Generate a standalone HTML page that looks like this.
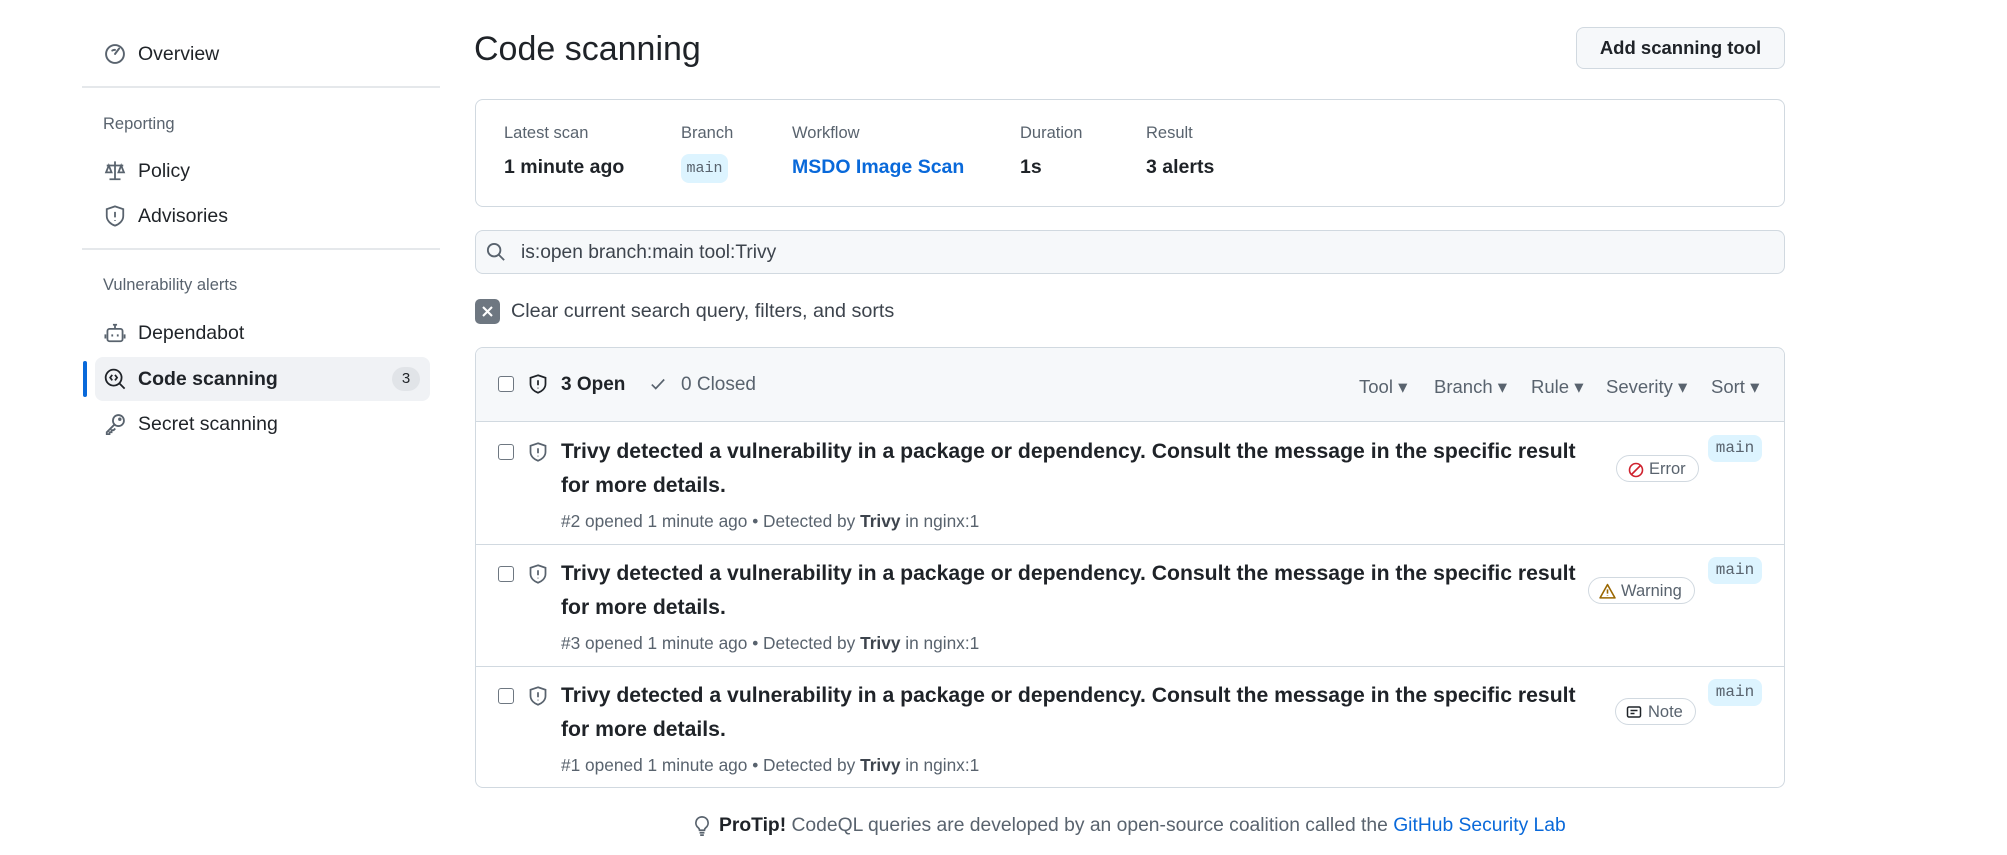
<!DOCTYPE html>
<html><head><meta charset="utf-8"><style>
*{box-sizing:border-box;margin:0;padding:0}
body{width:2007px;height:855px;background:#fff;font-family:"Liberation Sans",sans-serif;color:#1f2328;position:relative;overflow:hidden;font-size:18px}
.a{position:absolute;white-space:nowrap}
.ic{position:absolute}
.mut{color:#59636e}
.hr{position:absolute;height:2px;background:#e5e8eb}
.box{position:absolute;border:1.5px solid #d1d9e0;border-radius:8px}
.cb{position:absolute;width:16px;height:16px;border:1.5px solid #6e7781;border-radius:3px;background:#fff}
.tag{position:absolute;background:#ddf4ff;border-radius:8px;color:#59636e;font-family:"Liberation Mono",monospace;font-size:16px;line-height:26px;text-align:center}
.pill{position:absolute;border:1.5px solid #d1d9e0;border-radius:14px;height:27px;font-size:16.5px;color:#59636e;line-height:26px;padding:0 12px 0 32px}
.t{font-weight:bold;font-size:21.2px;line-height:34px}
.meta{font-size:17.3px}
</style></head><body>
<svg class="ic" style="left:104px;top:43px" width="22" height="22" viewBox="0 0 16 16" fill="none" stroke="#59636e" stroke-width="1.4"><circle cx="8" cy="8" r="6.5"/><path d="M8 8l3-4M6 5.5A3 3 0 0 1 8 5" stroke-linecap="round"/></svg>
<div class="a" style="left:138px;top:43px;font-size:19.5px">Overview</div>
<div class="hr" style="left:82px;top:86px;width:358px"></div>
<div class="a mut" style="left:103px;top:115px;font-size:16.5px">Reporting</div>
<svg class="ic" style="left:104px;top:160px" width="22" height="22" viewBox="0 0 16 16" fill="none" stroke="#59636e" stroke-width="1.3"><path d="M8 1v13M4 14h8M2 4h12M3.5 4l-2 5h4zM12.5 4l-2 5h4z"/></svg>
<div class="a" style="left:138px;top:160px;font-size:19.5px">Policy</div>
<svg class="ic" style="left:104px;top:205px" width="22" height="22" viewBox="0 0 16 16" fill="none" stroke="#59636e" stroke-width="1.3"><path d="M8 1l6 2v5c0 3.5-3 6-6 7-3-1-6-3.5-6-7V3z"/><path d="M8 5v4M8 11v.5"/></svg>
<div class="a" style="left:138px;top:205px;font-size:19.5px">Advisories</div>
<div class="hr" style="left:82px;top:248px;width:358px"></div>
<div class="a mut" style="left:103px;top:276px;font-size:16.5px">Vulnerability alerts</div>
<svg class="ic" style="left:104px;top:322px" width="22" height="22" viewBox="0 0 16 16" fill="none" stroke="#59636e" stroke-width="1.3"><rect x="2.5" y="5" width="11" height="9" rx="1.5"/><path d="M8 5V2M6.5 2h3M6 9v1.5M10 9v1.5M1 9v3M15 9v3"/></svg>
<div class="a" style="left:138px;top:322px;font-size:19.5px">Dependabot</div>
<div style="position:absolute;left:95px;top:357px;width:335px;height:44px;background:#f0f2f5;border-radius:8px"></div>
<div style="position:absolute;left:83px;top:361px;width:4px;height:36px;background:#0969da;border-radius:3px"></div>
<svg class="ic" style="left:104px;top:368px" width="22" height="22" viewBox="0 0 16 16" fill="none" stroke="#1f2328" stroke-width="1.3"><circle cx="7" cy="7" r="5.8"/><path d="M11.2 11.2L15 15M6 5L4.5 7 6 9M8 5l1.5 2L8 9"/></svg>
<div class="a" style="left:138px;top:368px;font-size:19.5px;font-weight:600">Code scanning</div>
<div class="a" style="left:392px;top:367px;width:28px;height:24px;border-radius:12px;background:#e1e4e8;font-size:15px;text-align:center;line-height:24px">3</div>
<svg class="ic" style="left:104px;top:413px" width="22" height="22" viewBox="0 0 16 16" fill="none" stroke="#59636e" stroke-width="1.3"><circle cx="10.5" cy="5.5" r="4"/><path d="M7.5 8.5L2 14v1.5h2V14h1.5v-1.5H7l1.2-1.2"/><circle cx="11.5" cy="4.5" r=".6"/></svg>
<div class="a" style="left:138px;top:413px;font-size:19.5px">Secret scanning</div>

<div class="a" style="left:474px;top:30px;font-size:34px">Code scanning</div>
<div class="a" style="left:1576px;top:27px;width:209px;height:42px;border:1.5px solid #d1d9e0;border-radius:8px;background:#f6f8fa;font-weight:bold;font-size:18.5px;text-align:center;line-height:39px">Add scanning tool</div>

<div class="box" style="left:475px;top:99px;width:1310px;height:108px"></div>
<div class="a mut" style="left:504px;top:124px;font-size:16.5px">Latest scan</div>
<div class="a" style="left:504px;top:156px;font-size:19.5px;font-weight:bold">1 minute ago</div>
<div class="a mut" style="left:681px;top:124px;font-size:16.5px">Branch</div>
<div class="tag" style="left:681px;top:154px;width:47px;height:29px;line-height:29px;font-size:15px">main</div>
<div class="a mut" style="left:792px;top:124px;font-size:16.5px">Workflow</div>
<div class="a" style="left:792px;top:156px;font-size:19.5px;font-weight:bold;color:#0969da">MSDO Image Scan</div>
<div class="a mut" style="left:1020px;top:124px;font-size:16.5px">Duration</div>
<div class="a" style="left:1020px;top:156px;font-size:19.5px;font-weight:bold">1s</div>
<div class="a mut" style="left:1146px;top:124px;font-size:16.5px">Result</div>
<div class="a" style="left:1146px;top:156px;font-size:19.5px;font-weight:bold">3 alerts</div>

<div class="box" style="left:475px;top:230px;width:1310px;height:44px;background:#f6f8fa"></div>
<svg class="ic" style="left:486px;top:242px" width="20" height="20" viewBox="0 0 16 16" fill="none" stroke="#59636e" stroke-width="1.5"><circle cx="6.5" cy="6.5" r="5"/><path d="M10.2 10.2L14.5 14.5"/></svg>
<div class="a" style="left:521px;top:242px;font-size:19.2px;color:#3d444d">is:open branch:main tool:Trivy</div>

<div class="a" style="left:475px;top:299px;width:25px;height:25px;background:#6e7781;border-radius:5px"></div>
<svg class="ic" style="left:480px;top:304px" width="15" height="15" viewBox="0 0 10 10" stroke="#fff" stroke-width="1.4"><path d="M2 2l6 6M8 2L2 8"/></svg>
<div class="a" style="left:511px;top:300px;font-size:19.8px;color:#3d444d">Clear current search query, filters, and sorts</div>

<div class="box" style="left:475px;top:347px;width:1310px;height:441px;overflow:hidden">
<div style="height:74px;background:#f6f8fa;border-bottom:1.5px solid #d1d9e0"></div>
<div style="position:absolute;left:0;right:0;top:196px;border-top:1.5px solid #d1d9e0"></div>
<div style="position:absolute;left:0;right:0;top:318px;border-top:1.5px solid #d1d9e0"></div>
</div>
<div class="cb" style="left:498px;top:376px"></div>
<svg class="ic" style="left:528px;top:374px" width="20" height="20" viewBox="0 0 16 16" fill="none" stroke="#1f2328" stroke-width="1.4"><path d="M8 1l6 2v5c0 3.5-3 6-6 7-3-1-6-3.5-6-7V3z"/><path d="M8 5v4M8 11v.5"/></svg>
<div class="a" style="left:561px;top:374px;font-size:19px;font-weight:bold">3 Open</div>
<svg class="ic" style="left:649px;top:375px" width="18" height="18" viewBox="0 0 16 16" fill="none" stroke="#59636e" stroke-width="1.5"><path d="M2.5 8.5l3.5 3.5 7.5-8"/></svg>
<div class="a mut" style="left:681px;top:374px;font-size:19px">0 Closed</div>
<div class="a mut" style="left:1359px;top:376px;font-size:18.5px">Tool ▾</div>
<div class="a mut" style="left:1434px;top:376px;font-size:18.5px">Branch ▾</div>
<div class="a mut" style="left:1531px;top:376px;font-size:18.5px">Rule ▾</div>
<div class="a mut" style="left:1606px;top:376px;font-size:18.5px">Severity ▾</div>
<div class="a mut" style="left:1711px;top:376px;font-size:18.5px">Sort ▾</div>

<div class="cb" style="left:498px;top:444px"></div>
<svg class="ic" style="left:528px;top:442px" width="20" height="20" viewBox="0 0 16 16" fill="none" stroke="#59636e" stroke-width="1.4"><path d="M8 1l6 2v5c0 3.5-3 6-6 7-3-1-6-3.5-6-7V3z"/><path d="M8 5v4M8 11v.5"/></svg>
<div class="a t" style="left:561px;top:435px">Trivy detected a vulnerability in a package or dependency. Consult the message in the specific result<br>for more details.</div>
<div class="a mut meta" style="left:561px;top:511px">#2 opened 1 minute ago • Detected by <b style="color:#3d444d">Trivy</b> in nginx:1</div>
<div class="pill" style="left:1616px;top:455px">Error</div>
<svg class="ic" style="left:1628px;top:462px" width="16" height="16" viewBox="0 0 16 16" fill="none" stroke="#cf222e" stroke-width="1.6"><circle cx="8" cy="8" r="6.5"/><path d="M3.5 12.5l9-9"/></svg>
<div class="tag" style="left:1708px;top:435px;width:54px;height:27px">main</div>

<div class="cb" style="left:498px;top:566px"></div>
<svg class="ic" style="left:528px;top:564px" width="20" height="20" viewBox="0 0 16 16" fill="none" stroke="#59636e" stroke-width="1.4"><path d="M8 1l6 2v5c0 3.5-3 6-6 7-3-1-6-3.5-6-7V3z"/><path d="M8 5v4M8 11v.5"/></svg>
<div class="a t" style="left:561px;top:557px">Trivy detected a vulnerability in a package or dependency. Consult the message in the specific result<br>for more details.</div>
<div class="a mut meta" style="left:561px;top:633px">#3 opened 1 minute ago • Detected by <b style="color:#3d444d">Trivy</b> in nginx:1</div>
<div class="pill" style="left:1588px;top:577px">Warning</div>
<svg class="ic" style="left:1599px;top:583px" width="17" height="17" viewBox="0 0 16 16" fill="none" stroke="#9a6700" stroke-width="1.5"><path d="M8 1.5L15 14H1z" stroke-linejoin="round"/><path d="M8 6v4M8 11.5v.5"/></svg>
<div class="tag" style="left:1708px;top:557px;width:54px;height:27px">main</div>

<div class="cb" style="left:498px;top:688px"></div>
<svg class="ic" style="left:528px;top:686px" width="20" height="20" viewBox="0 0 16 16" fill="none" stroke="#59636e" stroke-width="1.4"><path d="M8 1l6 2v5c0 3.5-3 6-6 7-3-1-6-3.5-6-7V3z"/><path d="M8 5v4M8 11v.5"/></svg>
<div class="a t" style="left:561px;top:679px">Trivy detected a vulnerability in a package or dependency. Consult the message in the specific result<br>for more details.</div>
<div class="a mut meta" style="left:561px;top:755px">#1 opened 1 minute ago • Detected by <b style="color:#3d444d">Trivy</b> in nginx:1</div>
<div class="pill" style="left:1615px;top:698px">Note</div>
<svg class="ic" style="left:1626px;top:704px" width="16" height="16" viewBox="0 0 16 16" fill="none" stroke="#1f2328" stroke-width="1.5"><rect x="1.5" y="3" width="13" height="10" rx="1.5"/><path d="M4.5 6.5h7M4.5 9.5h4"/></svg>
<div class="tag" style="left:1708px;top:679px;width:54px;height:27px">main</div>

<svg class="ic" style="left:692px;top:815px" width="20" height="22" viewBox="0 0 16 18" fill="none" stroke="#59636e" stroke-width="1.4"><path d="M8 1.5a5 5 0 0 0-3 9c.7.6 1 1.3 1 2h4c0-.7.3-1.4 1-2a5 5 0 0 0-3-9zM6 14.5h4M6.5 16.5h3"/></svg>
<div class="a mut" style="left:719px;top:815px;font-size:19.3px"><b style="color:#1f2328">ProTip!</b> CodeQL queries are developed by an open-source coalition called the <span style="color:#0969da">GitHub Security Lab</span></div>
</body></html>
